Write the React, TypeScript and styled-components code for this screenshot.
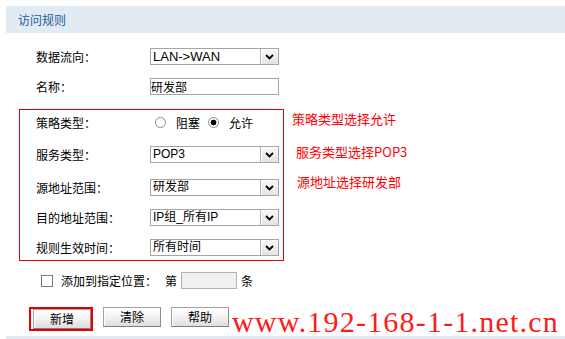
import React from 'react';
import styled, { createGlobalStyle } from 'styled-components';

const Global = createGlobalStyle`
  html, body { margin: 0; padding: 0; background: #fff; }
  body {
    font-family: "Noto Sans CJK SC", "Liberation Sans", sans-serif;
    font-size: 12px;
    color: #000;
  }
  * { box-sizing: border-box; }
`;

const Page = styled.div`
  width: 565px;
  height: 339px;
  overflow: hidden;
  padding-top: 6px;
`;

const Header = styled.div`
  margin-left: 6px;
  height: 27px;
  background: #e2ebf1;
  color: #1a5c9e;
  font-size: 12px;
  line-height: 27px;
  padding-left: 12px;
`;

const Form = styled.div`
  margin-top: 15px;
`;

const Row = styled.div<{ $mt?: number; $pl?: number }>`
  display: flex;
  align-items: center;
  height: 17px;
  margin-top: ${(p) => p.$mt ?? 0}px;
  padding-left: ${(p) => p.$pl ?? 0}px;
`;

const Label = styled.span`
  flex: none;
  width: 114px;
  line-height: 17px;
  white-space: nowrap;
`;

const SelectBox = styled.div`
  flex: none;
  display: flex;
  width: 129px;
  height: 17px;
  border: 1px solid #a5a5a5;
  background: #fff;
`;

const SelectValue = styled.span<{ $size?: number }>`
  flex: 1;
  padding-left: 2px;
  font-family: "Liberation Sans", "Noto Sans CJK SC", sans-serif;
  font-size: ${(p) => p.$size ?? 12}px;
  line-height: 15px;
  white-space: nowrap;
  overflow: hidden;
`;

const SelectArrow = styled.span`
  flex: none;
  width: 18px;
  height: 15px;
  border-left: 1px solid #b4b4b4;
  background: linear-gradient(#f8f8f8, #e4e4e4);
  box-shadow: inset 1px 1px 0 #fff;
  display: flex;
  align-items: center;
  justify-content: center;
`;

const Chevron = () => (
  <svg width="9" height="6" viewBox="0 0 9 6">
    <path d="M1 1 L4.5 4.5 L8 1" fill="none" stroke="#000" strokeWidth="1.8" />
  </svg>
);

const Select = ({ value, size }: { value: string; size?: number }) => (
  <SelectBox role="combobox">
    <SelectValue $size={size}>{value}</SelectValue>
    <SelectArrow>
      <Chevron />
    </SelectArrow>
  </SelectBox>
);

const TextInput = styled.input`
  flex: none;
  width: 129px;
  height: 17px;
  border: 1px solid #a5a5a5;
  padding: 0;
  font-family: "Noto Sans CJK SC", sans-serif;
  font-size: 12px;
  line-height: 15px;
  color: #000;
  outline: none;
`;

const BoxArea = styled.div`
  display: flex;
  align-items: flex-start;
  margin: 14px 0 0 19px;
`;

const Box = styled.div`
  width: 265px;
  border: 1px solid #e60000;
  padding: 4px 0 4px 16px;
`;

const Notes = styled.div`
  padding-left: 8px;
`;

const Note = styled.div<{ $mt: number; $ml: number }>`
  color: #ff0000;
  font-size: 13px;
  line-height: 14px;
  white-space: nowrap;
  margin-top: ${(p) => p.$mt}px;
  margin-left: ${(p) => p.$ml}px;
`;

const Radio = styled.input.attrs({ type: 'radio' })<{ $ml: number }>`
  appearance: none;
  flex: none;
  width: 11px;
  height: 11px;
  margin: 0 0 0 ${(p) => p.$ml}px;
  border: 1px solid #8c8c8c;
  border-radius: 50%;
  background: #fff;
  &:checked {
    background: radial-gradient(circle, #000 0 2.6px, #fff 3.2px);
  }
`;

const OptionText = styled.span<{ $ml: number }>`
  margin-left: ${(p) => p.$ml}px;
  line-height: 17px;
`;

const CheckBox = styled.input.attrs({ type: 'checkbox' })`
  appearance: none;
  flex: none;
  width: 12px;
  height: 12px;
  margin: 1px 0 0 0;
  border: 1px solid #777;
  background: #fff;
`;

const Text = styled.span<{ $ml: number }>`
  margin-left: ${(p) => p.$ml}px;
  line-height: 17px;
  white-space: nowrap;
`;

const PosInput = styled.input`
  flex: none;
  width: 56px;
  height: 17px;
  margin-left: 4px;
  border: 1px solid #b2b2b2;
  background: #f0f0f0;
  padding: 0;
  outline: none;
`;

const ButtonRow = styled.div`
  display: flex;
  align-items: flex-start;
  height: 24px;
  margin-top: 18px;
  padding-left: 29px;
  gap: 10px;
`;

const Highlight = styled.span`
  display: flex;
  border: 2px solid #e60000;
  border-right-width: 2px;
  padding-left: 2px;
`;

const Button = styled.button`
  flex: none;
  width: 58px;
  height: 20px;
  padding: 0;
  border: 1px solid #a3a3a3;
  border-bottom-color: #808080;
  border-right-color: #8c8c8c;
  background: linear-gradient(#ffffff 0%, #f4f4f4 45%, #dedede 100%);
  box-shadow: inset 1px 1px 0 #fff;
  font-family: "Noto Sans CJK SC", sans-serif;
  font-size: 12px;
  line-height: 18px;
  color: #000;
`;

const Watermark = styled.span`
  flex: none;
  margin: 5px 0 0 -7px;
  height: 20px;
  font-family: "Liberation Serif", serif;
  font-size: 30px;
  line-height: 20px;
  letter-spacing: 1.2px;
  color: #ff1a1a;
  white-space: nowrap;
`;

const Band = styled.div`
  margin: 5px 0 0 6px;
  height: 8px;
  background: #e2ebf1;
`;

export default function App() {
  return (
    <>
      <Global />
      <Page>
        <Header>访问规则</Header>
        <Form>
          <Row $pl={36}>
            <Label>数据流向：</Label>
            <Select value="LAN->WAN" size={13} />
          </Row>
          <Row $pl={36} $mt={13}>
            <Label>名称：</Label>
            <TextInput readOnly defaultValue="研发部" />
          </Row>
          <BoxArea>
            <Box>
              <Row>
                <Label>策略类型：</Label>
                <Radio name="policy" $ml={5} readOnly />
                <OptionText $ml={10}>阻塞</OptionText>
                <Radio name="policy" $ml={8} defaultChecked />
                <OptionText $ml={10}>允许</OptionText>
              </Row>
              <Row $mt={15}>
                <Label>服务类型：</Label>
                <Select value="POP3" />
              </Row>
              <Row $mt={16}>
                <Label>源地址范围：</Label>
                <Select value="研发部" />
              </Row>
              <Row $mt={13}>
                <Label>目的地址范围：</Label>
                <Select value="IP组_所有IP" />
              </Row>
              <Row $mt={13}>
                <Label>规则生效时间：</Label>
                <Select value="所有时间" />
              </Row>
            </Box>
            <Notes>
              <Note $mt={3} $ml={0}>策略类型选择允许</Note>
              <Note $mt={19} $ml={4}>服务类型选择POP3</Note>
              <Note $mt={16} $ml={5}>源地址选择研发部</Note>
            </Notes>
          </BoxArea>
          <Row $pl={41} $mt={11}>
            <CheckBox />
            <Text $ml={8}>添加到指定位置：</Text>
            <Text $ml={8}>第</Text>
            <PosInput readOnly />
            <Text $ml={4}>条</Text>
          </Row>
          <ButtonRow>
            <Highlight>
              <Button>新增</Button>
            </Highlight>
            <Button>清除</Button>
            <Button>帮助</Button>
            <Watermark>www.192-168-1-1.net.cn</Watermark>
          </ButtonRow>
          <Band />
        </Form>
      </Page>
    </>
  );
}
